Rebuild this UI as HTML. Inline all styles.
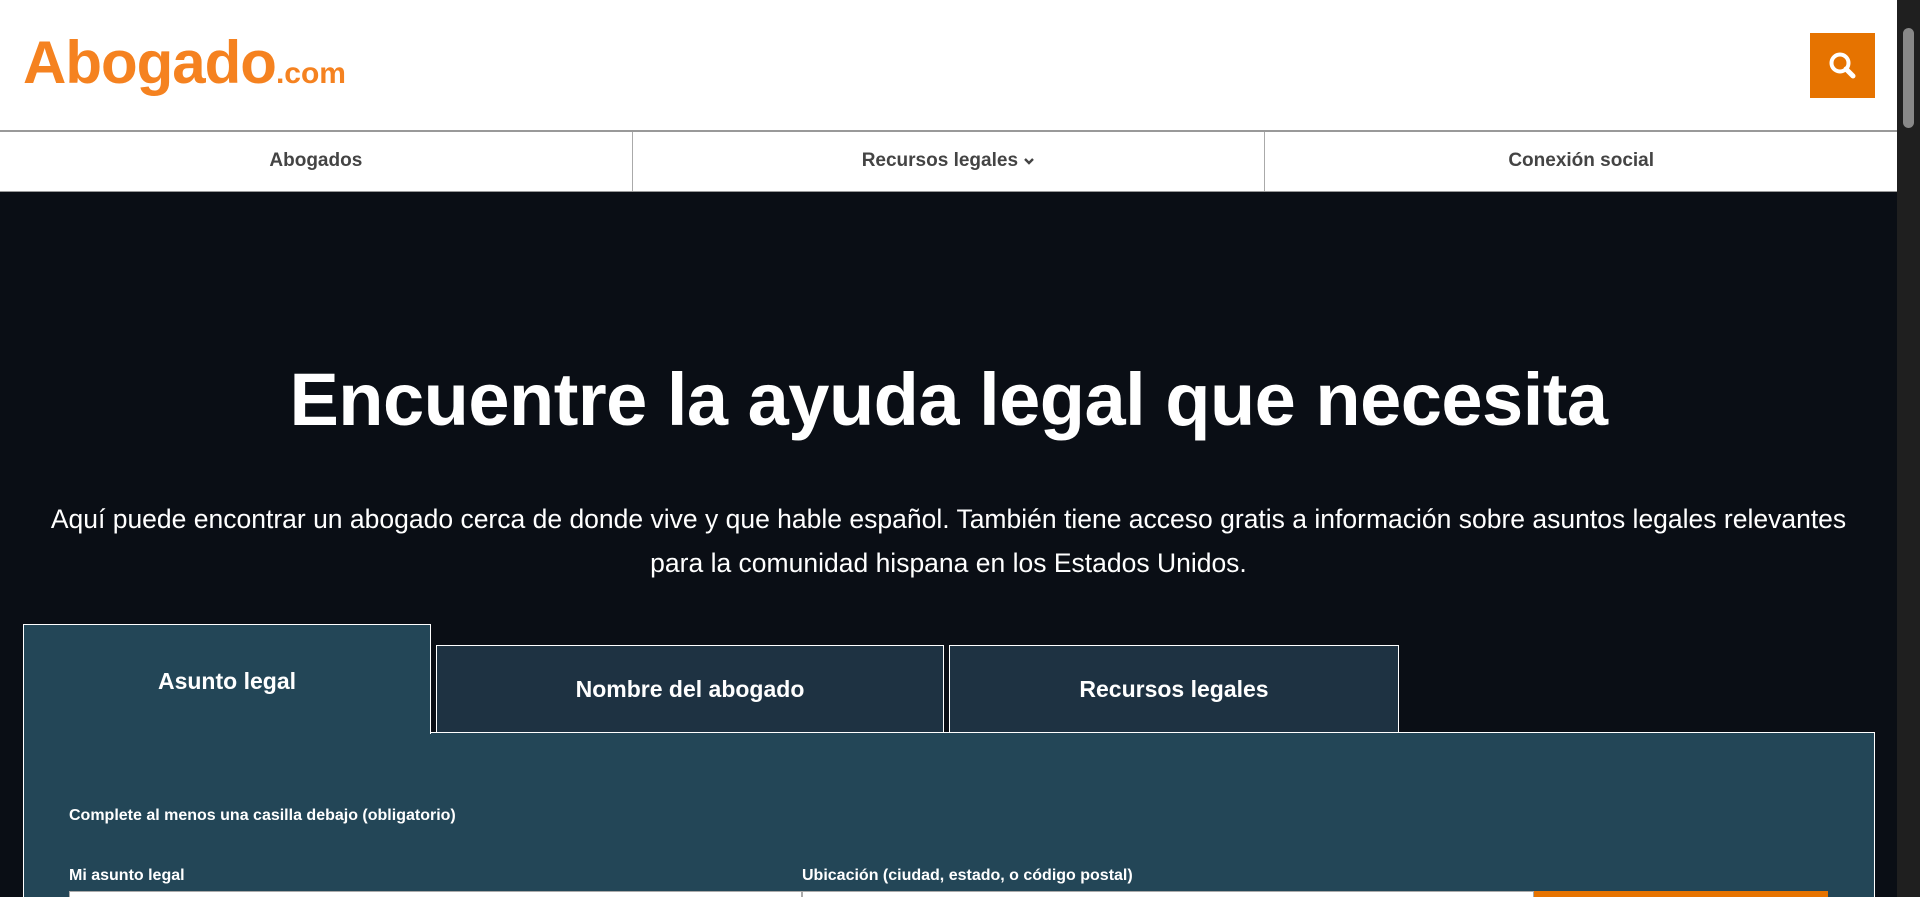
<!DOCTYPE html>
<html><head><meta charset="utf-8"><style>
*{box-sizing:border-box;margin:0;padding:0}
html,body{width:1920px;height:897px;overflow:hidden;font-family:"Liberation Sans",sans-serif}
body{background:#0a0e15;position:relative}
.hdr{position:absolute;left:0;top:0;width:1897px;height:132px;background:#fff;border-bottom:2px solid #999}
.logo{position:absolute;left:23px;top:28px;color:#f58220;font-weight:bold;font-size:60px;letter-spacing:-1px}
.logo span{font-size:30px;letter-spacing:0}
.sbtn{position:absolute;left:1810px;top:33px;width:65px;height:65px;background:#e67300}
.nav{position:absolute;left:0;top:132px;width:1897px;height:60px;background:#fff;border-bottom:1px solid #999;display:flex}
.nav div{flex:1;text-align:center;line-height:58px;font-weight:bold;font-size:19px;color:#444;border-right:1px solid #aaa}
.nav div:last-child{border-right:none}
.scroll{position:absolute;left:1897px;top:0;width:23px;height:897px;background:#1f1f1f}
.scroll i{position:absolute;left:6px;top:28px;width:11px;height:100px;background:#888;border-radius:6px}
h1{position:absolute;left:0;width:1897px;top:357px;text-align:center;color:#fff;font-size:74px;font-weight:bold;letter-spacing:-0.5px}
p.lead{position:absolute;left:0;width:1897px;top:497px;text-align:center;color:#fff;font-size:26.5px;line-height:44px;white-space:nowrap}
.tab{position:absolute;color:#fff;font-weight:bold;font-size:23px;text-align:center;border:1px solid #fff}
.t1{left:23px;top:624px;width:408px;height:110px;background:#234657;border-bottom:none;padding-top:43px;z-index:2}
.t2{left:436px;top:645px;width:508px;height:88px;background:#1e3242;line-height:86px}
.t3{left:949px;top:645px;width:450px;height:88px;background:#1e3242;line-height:86px}
.panel{position:absolute;left:23px;top:732px;width:1852px;height:200px;background:#234657;border:1px solid #fff}
.c{position:absolute;left:69px;top:807px;color:#fff;font-weight:bold;font-size:16px}
.l{position:absolute;top:867px;color:#fff;font-weight:bold;font-size:16px}
.in{position:absolute;top:891px;height:20px;background:#fff;border:1px solid #aaa}
</style></head><body>
<div class="hdr"><div class="logo">Abogado<span>.com</span></div>
<div class="sbtn"><svg width="65" height="65" viewBox="0 0 65 65"><circle cx="30" cy="30" r="8.5" fill="none" stroke="#fff" stroke-width="4"/><line x1="36" y1="36" x2="43" y2="43" stroke="#fff" stroke-width="5" stroke-linecap="round"/></svg></div></div>
<div class="nav"><div>Abogados</div><div>Recursos legales <svg width="12" height="10" viewBox="0 0 12 10"><path d="M2 3l4 4 4-4" fill="none" stroke="#444" stroke-width="2.4"/></svg></div><div>Conexión social</div></div>
<div class="scroll"><i></i></div>
<h1>Encuentre la ayuda legal que necesita</h1>
<p class="lead">Aquí puede encontrar un abogado cerca de donde vive y que hable español. También tiene acceso gratis a información sobre asuntos legales relevantes<br>para la comunidad hispana en los Estados Unidos.</p>
<div class="panel"></div>
<div class="tab t1">Asunto legal</div>
<div class="tab t2">Nombre del abogado</div>
<div class="tab t3">Recursos legales</div>
<div class="c">Complete al menos una casilla debajo (obligatorio)</div>
<div class="l" style="left:69px">Mi asunto legal</div>
<div class="l" style="left:802px">Ubicación (ciudad, estado, o código postal)</div>
<div class="in" style="left:69px;width:733px"></div>
<div class="in" style="left:802px;width:732px"></div>
<div class="in" style="left:1534px;width:294px;background:#e67300;border:none"></div>
</body></html>
